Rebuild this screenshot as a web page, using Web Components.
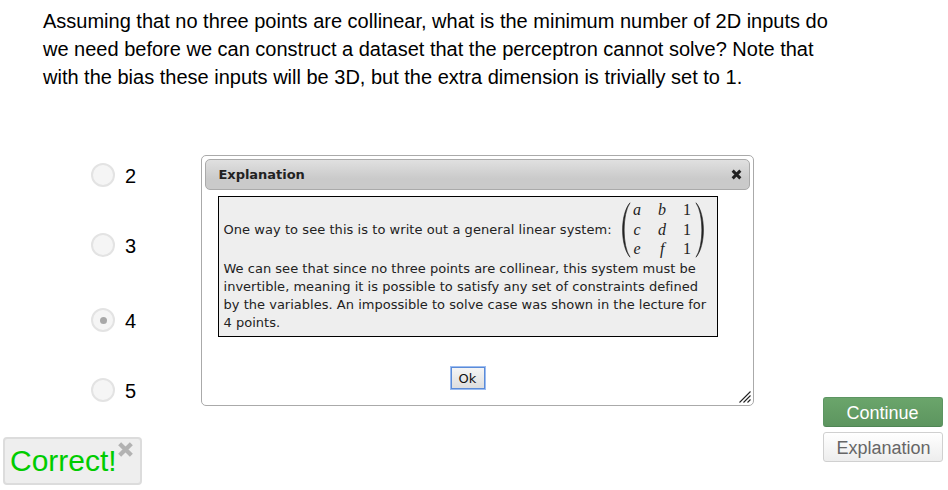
<!DOCTYPE html>
<html lang="en">
<head>
<meta charset="utf-8">
<title>Perceptron quiz</title>
<style>
html,body{margin:0;width:948px;height:490px;overflow:hidden;background:#fff;font-family:"Liberation Sans",Arial,sans-serif}
</style>
</head>
<body>
<quiz-page></quiz-page>
<script>
const define = (name, html) => customElements.define(name, class extends HTMLElement {
  constructor() {
    super();
    this.attachShadow({mode: 'open'}).innerHTML = html;
  }
});

define('quiz-question', `<style>
:host{display:block;font-size:20px;line-height:28px;color:#000;padding:7px 0 0 43px;white-space:nowrap}
</style><slot></slot>`);

define('quiz-choice', `<style>
:host{display:flex;align-items:flex-start;gap:10px;height:24px;font-size:20px;color:#000}
i{box-sizing:border-box;width:24px;height:24px;border:2px solid #e3e3e3;border-radius:50%;background:#f5f5f5;display:grid;place-items:center}
:host([checked]) i::before{content:"";width:7px;height:7px;border-radius:50%;background:#a8a8a8}
span{line-height:24px;padding-top:1px}
</style><i></i><span><slot></slot></span>`);

define('quiz-button', `<style>
:host{display:block}
button{display:block;box-sizing:border-box;width:120px;height:30px;margin:0;padding:2px 0 0 1px;border:1px solid #d0d0d0;border-radius:3px;
 background:linear-gradient(#fff,#ededed);font:18px/26px "Liberation Sans",Arial,sans-serif;color:#666;white-space:nowrap}
:host([primary]) button{padding:2px 1px 0 0;border-color:#5c9562 #5c9562 #4f8555;background:linear-gradient(#6ba56b,#5d955f);color:#fff}
</style><button><slot></slot></button>`);

define('feedback-toast', `<style>
:host{display:flex;box-sizing:border-box;width:139px;height:48px;border:2px solid #dcdcdc;border-radius:4px;background:#eee;padding-left:5px}
span{font-size:30px;line-height:44px;color:#00cc00}
svg{width:17px;height:17px;margin:2px 0 0 0;flex:none}
</style><span><slot></slot></span><svg viewBox="0 0 16 16"><path d="M2.5 2.5 13.5 13.5M13.5 2.5 2.5 13.5" stroke="#b2b2b2" stroke-width="4"/></svg>`);

define('math-matrix', `<style>
:host{display:inline-flex;height:58px;width:84px;color:#222}
svg{width:10px;height:56px;flex:none;margin-top:1px}
div{display:grid;grid-template-columns:25px 25px 25px;grid-auto-rows:19.5px;justify-items:center;margin:-1px -5px 0 -6px;
 font:16px/19.5px "Liberation Serif","Times New Roman",serif}
em{font-style:italic}
</style>
<svg viewBox="0 0 10 56"><path d="M9 .8C-.9 12-.9 44 9 55.2C1.2 44 1.2 12 9 .8Z" fill="#222" stroke="#222" stroke-width=".6"/></svg>
<div><em>a</em><em>b</em><span>1</span><em>c</em><em>d</em><span>1</span><em>e</em><em>f</em><span>1</span></div>
<svg viewBox="0 0 10 56"><path d="M1 .8C10.9 12 10.9 44 1 55.2C8.8 44 8.8 12 1 .8Z" fill="#222" stroke="#222" stroke-width=".6"/></svg>`);

define('modal-dialog', `<style>
:host{display:flex;flex-direction:column;box-sizing:border-box;width:553px;height:251px;padding:3px;border:1px solid #aaa;border-radius:5px;
 background:#fff;color:#222;font-family:"DejaVu Sans",Verdana,sans-serif;font-size:13px}
header{display:flex;align-items:center;justify-content:space-between;box-sizing:border-box;height:31px;padding:0 7px 0 12.5px;
 border:1px solid #aaa;border-radius:5px;background:linear-gradient(#e0e0e0,#cacaca 65%,#cacaca);font-weight:bold;line-height:29px;letter-spacing:-.04px}
header svg{width:11px;height:11px}
section{box-sizing:border-box;width:500px;height:141px;margin:6px 0 0 13px;border:1px solid #000;background:#eee;padding:3px 4px 3px 4.5px;line-height:18px}
footer{display:flex;justify-content:center;margin-top:30px;padding-right:20px}
footer button{box-sizing:border-box;width:34px;height:22px;padding:1px 0 0;border:1px solid #5b8bd8;outline:1px solid #9cbcf0;outline-offset:0;
 background:linear-gradient(#f5f5f5,#dedede);font:13px/19px "DejaVu Sans",Verdana,sans-serif;color:#111}
.grip{position:absolute;right:2px;bottom:2px;width:12px;height:12px}
</style>
<header><slot name="title"></slot><svg viewBox="0 0 10 10"><path d="M1.5 1.5 8.5 8.5M8.5 1.5 1.5 8.5" stroke="#222" stroke-width="2.7"/></svg></header>
<section><slot></slot></section>
<footer><button>Ok</button></footer>
<svg class="grip" viewBox="0 0 12 12"><path d="M.5 11.5 11.5.5M4.5 11.5 11.5 4.5M8.5 11.5 11.5 8.5" stroke="#222" stroke-width="1.1" fill="none"/></svg>`);

define('dialog-text', `<style>
:host{display:block;white-space:nowrap;line-height:18px;letter-spacing:.018px}
:host([formula]){display:flex;align-items:center;gap:9px;height:60px;letter-spacing:.055px}
</style><slot></slot>`);

define('quiz-page', `<style>
:host{display:grid;grid-template-rows:163px 1fr;position:relative;width:948px;height:490px}
main{display:flex;justify-content:space-between;align-items:flex-start}
.choices{display:grid;grid-template-rows:70px 75px 70px 24px;padding-left:91px}
aside{display:grid;gap:5px;margin:234px 5px 0 0}
modal-dialog{position:absolute;left:201px;top:155px}
feedback-toast{position:absolute;left:3px;top:437px}
</style>
<quiz-question>Assuming that no three points are collinear, what is the minimum number of 2D inputs do<br>we need before we can construct a dataset that the perceptron cannot solve? Note that<br>with the bias these inputs will be 3D, but the extra dimension is trivially set to 1.</quiz-question>
<main>
<div class="choices"><quiz-choice>2</quiz-choice><quiz-choice>3</quiz-choice><quiz-choice checked>4</quiz-choice><quiz-choice>5</quiz-choice></div>
<aside><quiz-button primary>Continue</quiz-button><quiz-button>Explanation</quiz-button></aside>
</main>
<modal-dialog><span slot="title">Explanation</span>
<dialog-text formula><span>One way to see this is to write out a general linear system:</span><math-matrix></math-matrix></dialog-text>
<dialog-text>We can see that since no three points are collinear, this system must be<br>invertible, meaning it is possible to satisfy any set of constraints defined<br>by the variables. An impossible to solve case was shown in the lecture for<br>4 points.</dialog-text>
</modal-dialog>
<feedback-toast>Correct!</feedback-toast>`);
</script>
</body>
</html>
